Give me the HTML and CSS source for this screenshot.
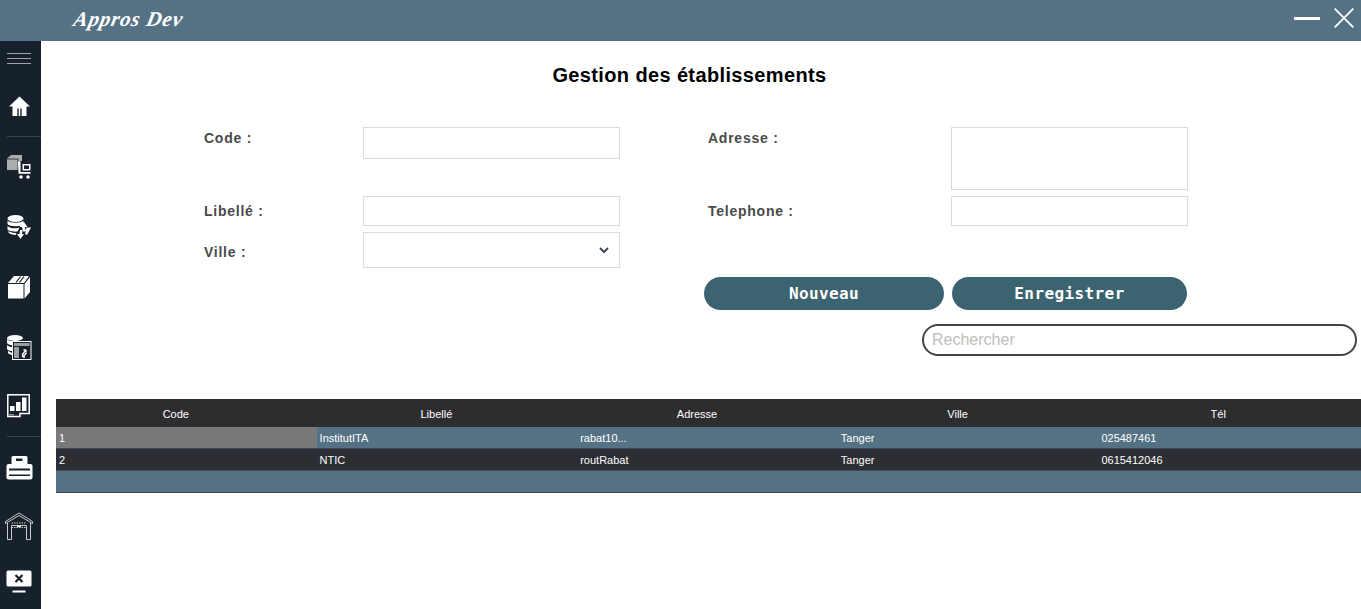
FILE: index.html
```html
<!DOCTYPE html>
<html lang="fr">
<head>
<meta charset="utf-8">
<title>Approvisionnement - Gestion des établissements</title>
<link rel="stylesheet" href="styles.css">
</head>
<body>
<div class="app">
  <header class="topbar">
    <div class="logo">Appros Dev</div>
    <div class="win-controls">
      <svg class="win-min" width="26" height="3" viewBox="0 0 26 3"><rect width="26" height="3" fill="#fff"/></svg>
      <svg class="win-close" width="20" height="20" viewBox="0 0 20 20"><path d="M.7.7l18.6 18.6M19.3.7L.7 19.3" stroke="#fff" stroke-width="1.800" fill="none"/></svg>
    </div>
  </header>
  <div class="body-row">
    <nav class="sidebar">
      <div class="burger"><span></span><span></span><span></span></div>
      <div class="nav-item h60 sep home-item">
        <svg width="21" height="20" viewBox="0 0 21 20"><path d="M10.500.5L0 10.500h3.500V20h4.800v-7.500h1.400V20h1.600v-7.500h1.400V20h4.800v-9.500H21z" fill="#fff"/></svg>
      </div>
      <div class="nav-item h60">
        <svg width="24" height="24" viewBox="0 0 24 24"><path d="M0 3.500L4 0h11v6h-2v3h-2v6H0z" fill="#a9adae"/><path d="M0 4h11v11" stroke="#17212b" stroke-width=".8" fill="none"/><path d="M11 6.500h2.500V17h10v1.800H11.500z" fill="#fff"/><rect x="15.500" y="9" width="8" height="6.500" fill="#fff"/><rect x="17" y="10.500" width="5" height="3.500" fill="#17212b"/><circle cx="14" cy="22" r="1.800" fill="#fff"/><circle cx="21" cy="22" r="1.800" fill="#fff"/></svg>
      </div>
      <div class="nav-item h60">
        <svg width="24" height="24" viewBox="0 0 24 24"><ellipse cx="8.500" cy="3.500" rx="8" ry="3.500" fill="#fff"/><path d="M.5 5.500c2 3 14 3 16 0V9c-2 3-14 3-16 0zM.5 11c2 2.500 9 3 12 1.500l-2 4C7 17 1.500 16 .5 14.500zM1.500 16c2 1.500 5 2 8 2l-1 2c-3 0-6-1-7-2.500z" fill="#fff"/><path d="M17 7l3.500 5H18l1 4.500h-3l-1-4.500h-2.500zM13.500 24l-3.500-5h2.500l.5-4h2.500l-.5 4H17z" fill="#fff"/><path d="M19.500 12.500H24L20 20l-2-1z" fill="#fff"/></svg>
      </div>
      <div class="nav-item h60">
        <svg width="24" height="24" viewBox="0 0 24 24"><path d="M1 8L7 1h15l-5 7zM17.500 9L23 2v15l-5.500 6.500zM1 9h15.500v14.500H1z" fill="#fff"/><path d="M9 7.500l4.500-6M12.500 7.500L17 1.500" stroke="#17212b" stroke-width="1.200" fill="none"/></svg>
      </div>
      <div class="nav-item h60">
        <svg width="25" height="25" viewBox="0 0 25 25"><ellipse cx="8" cy="3" rx="8" ry="3" fill="#fff"/><path d="M0 4v4c1 1.500 3 2 5 2V6C3 6 1 5 0 4zM0 10v4c1 1.500 3 2 5 2v-4c-2 0-4-1-5-2zM1 16v2c1 1 3 2 4 2v-2z" fill="#fff"/><rect x="5.500" y="6.500" width="18.500" height="18" fill="#17212b" stroke="#fff"/><rect x="7" y="8" width="15.500" height="3" fill="#9a9ea1"/><rect x="7" y="12" width="5" height="11" fill="#9a9ea1"/><path d="M15 20l4-5M19 15h-2.500M19 15v2.500M19.500 18l-4 4M15.500 22H18M15.500 22v-2.500" stroke="#fff" stroke-width="1.300" fill="none"/></svg>
      </div>
      <div class="nav-item h60 sep chart-item">
        <svg width="23" height="24" viewBox="0 0 23 24"><path d="M.8.8h21.400v18.700H13v3H.8z" fill="none" stroke="#fff" stroke-width="1.500"/><rect x="3" y="12" width="4.500" height="5" fill="#fff"/><rect x="9" y="8" width="4.500" height="9" fill="#fff"/><rect x="15" y="3.500" width="4.500" height="13.500" fill="#fff"/><rect x="1" y="20" width="6" height="1.500" fill="#8a8f92"/></svg>
      </div>
      <div class="nav-item h60">
        <svg width="27" height="25" viewBox="0 0 27 25"><path d="M5.500 9V2.500Q5.500 1 7 1h13q1.500 0 1.500 1.500V9z" fill="#fff"/><rect x="10" y="3.500" width="6.500" height="2.500" fill="#17212b"/><path d="M2.500 9h22q2 0 2 2v11.500q0 2-2 2h-22q-2 0-2-2V11q0-2 2-2z" fill="#fff"/><rect x="3" y="13.500" width="21" height="2" fill="#17212b"/><rect x="3" y="19.500" width="21" height="1.500" fill="#17212b"/></svg>
      </div>
      <div class="nav-item h58">
        <svg width="28" height="28" viewBox="0 0 28 28" fill="none" stroke="#c9cccd"><path d="M.5 9.500L14 1l13.500 8.500v2L14 3.500.5 11.500z"/><path d="M2.500 11v16.500h4V13.500h15v14h4V11"/><path d="M6.500 11h15M6.500 15.500h15" stroke-dasharray="1.500 1"/><path d="M12 14.500h4" stroke="#fff" stroke-width="1.300"/></svg>
      </div>
      <div class="nav-item h53">
        <svg width="26" height="23" viewBox="0 0 26 23"><rect x=".5" y=".5" width="25" height="16" rx="1.500" fill="#fff"/><path d="M9.500 5l7 7M16.500 5l-7 7" stroke="#17212b" stroke-width="2.200"/><rect x="6.500" y="20.500" width="13" height="2" fill="#fff"/></svg>
      </div>
    </nav>
    <main class="content">
      <h1 class="title">Gestion des établissements</h1>
      <form class="form-grid">
        <label class="lbl lbl-top">Code :</label>
        <div class="cell-top"><input class="field field-code" type="text"></div>
        <label class="lbl lbl-top lbl-right">Adresse :</label>
        <textarea class="field field-area"></textarea>

        <label class="lbl">Libellé :</label>
        <input class="field" type="text">
        <label class="lbl lbl-right">Telephone :</label>
        <input class="field" type="text">

        <label class="lbl lbl-ville">Ville :</label>
        <div class="select-wrap">
          <select class="field field-select"><option></option></select>
          <svg class="chev" width="10" height="7" viewBox="0 0 10 7"><path d="M1 1l4 4 4-4" fill="none" stroke="#3d4a5c" stroke-width="2"/></svg>
        </div>
        <div class="btns">
          <button type="button" class="btn btn-new">Nouveau</button>
          <button type="button" class="btn btn-save">Enregistrer</button>
        </div>
      </form>
      <div class="search-row"><input class="search" type="text" placeholder="Rechercher"></div>
      <div class="grid">
        <div class="grow ghead"><div>Code</div><div>Libellé</div><div>Adresse</div><div>Ville</div><div>Tél</div></div>
        <div class="grow row-a"><div class="cell-sel">1</div><div>InstitutITA</div><div>rabat10...</div><div>Tanger</div><div>025487461</div></div>
        <div class="grow row-b"><div>2</div><div>NTIC</div><div>routRabat</div><div>Tanger</div><div>0615412046</div></div>
        <div class="grow row-a row-empty"></div>
      </div>
    </main>
  </div>
</div>
</body>
</html>
```

FILE: styles.css
```css
* { box-sizing: border-box; }
html, body { margin: 0; height: 100%; overflow: hidden; background: #fff; }
body { font-family: "Liberation Sans", Arial, sans-serif; }
.app { display: flex; flex-direction: column; height: 609px; }

.topbar { height: 41px; flex: none; background: #557285; display: flex; align-items: center; justify-content: space-between; padding-left: 74px; }
.logo { font-family: "Liberation Serif", serif; font-weight: 700; font-style: italic; font-size: 21px; letter-spacing: 0.8px; color: #fff; transform: skewX(-12deg); margin-top: -3px; }
.win-controls { display: flex; align-items: center; height: 100%; padding-right: 7px; }
.win-min { margin-right: 14px; margin-top: -4px; }
.win-close { margin-top: -5px; }

.body-row { flex: 1; display: flex; min-height: 0; }
.sidebar { width: 41px; flex: none; background: #17212b; display: flex; flex-direction: column; }
.burger { height: 36px; flex: none; padding: 12px 10px 0 7px; display: flex; flex-direction: column; gap: 4px; }
.burger span { height: 1px; background: #9da3a8; }
.nav-item { display: flex; align-items: center; justify-content: center; flex: none; padding-right: 3px; }
.h60 { height: 60px; }
.h58 { height: 58px; }
.h53 { height: 53px; }
.sep { border-bottom: 1px solid #3a444e; margin-left: 7px; padding-right: 10px; }
.home-item svg { margin-top: -1px; }
.chart-item svg { margin-top: -2px; margin-left: -1px; }

.content { flex: 1; min-width: 0; padding-left: 15px; display: flex; flex-direction: column; }
.title { margin: 0; height: 86px; padding: 21px 38px 0 0; text-align: center; font-size: 20px; font-weight: 700; color: #000; line-height: 26px; font-family: "Liberation Sans", sans-serif; letter-spacing: 0.37px; }

.form-grid { display: grid; grid-template-columns: 159px 257px 331px 237px; grid-template-rows: 63px 30px 36px 33px; row-gap: 6px; padding-left: 148px; }
.lbl { font-size: 14px; font-weight: 700; color: #4a4a4a; line-height: 16px; display: flex; align-items: center; letter-spacing: 0.75px; }
.lbl-top { align-items: flex-start; padding-top: 3px; }
.lbl-right { margin-left: 88px; }
.lbl-ville { margin-top: 3px; }
.field { display: block; width: 100%; height: 100%; border: 1px solid #d8dadc; background: #fff; margin: 0; padding: 4px 8px; border-radius: 0; outline: none; resize: none; font: 14px "Liberation Sans", sans-serif; }
.field-code { height: 32px; }
.select-wrap { position: relative; }
.field-select { appearance: none; -webkit-appearance: none; }
.chev { position: absolute; right: 11px; top: 15px; }

.btns { grid-column: 3 / 5; grid-row: 4; display: flex; gap: 8px; padding-left: 84px; margin-top: 3px; height: 33px; }
.btn { border: none; height: 33px; border-radius: 17px; background: #3c6370; color: #fff; font: 700 16px "DejaVu Sans Mono", monospace; letter-spacing: 0.4px; padding: 0; }
.btn-new { width: 240px; }
.btn-save { width: 235px; }

.search-row { display: flex; justify-content: flex-end; padding-right: 4px; margin-top: 17px; }
.search { width: 435px; height: 32px; border: 2px solid #444; border-radius: 16px; padding: 0 8px; outline: none; font: 16px "Liberation Sans", sans-serif; background: #fff; }
.search::placeholder { color: #bdbdbd; opacity: 1; }

.grid { margin-top: 43px; font: 11px "Liberation Sans", sans-serif; color: #fff; }
.grow { display: grid; grid-template-columns: repeat(5, 1fr); height: 22px; line-height: 23px; border-bottom: 1px solid #3f4c57; padding-right: 2px; }
.grow > div { padding-left: 3px; overflow: hidden; white-space: nowrap; }
.ghead { height: 28px; line-height: 31px; background: #2d2d30; border-bottom: none; }
.ghead > div { text-align: center; padding: 0 21px 0 0; }
.row-a { background: #557285; }
.row-b { background: #2d2e33; }
.row-empty { display: block; }
.cell-sel { background: #767879; }
```
